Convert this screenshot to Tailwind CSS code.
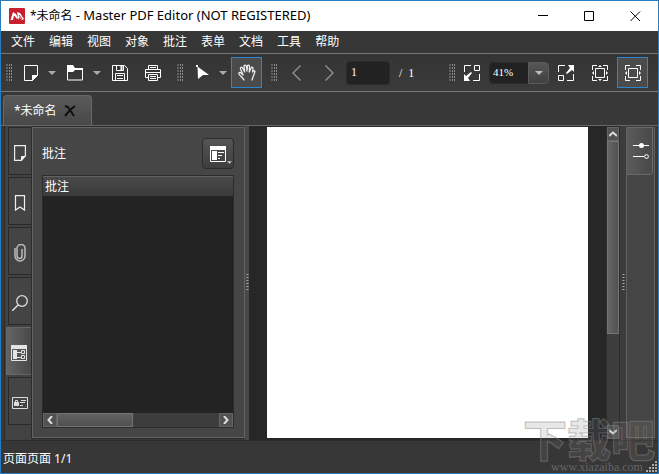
<!DOCTYPE html>
<html lang="zh-CN">
<head>
    <meta charset="UTF-8">
    <meta name="viewport" content="width=device-width, initial-scale=1.0">
    <title>*未命名 - Master PDF Editor</title>
    <script src="https://cdn.jsdelivr.net/npm/@tailwindcss/browser@4"></script>
</head>
<body class="h-screen overflow-hidden bg-[#383838] font-['Noto_Sans','Noto_Sans_CJK_SC',sans-serif] text-xs text-white">
    <div class="relative h-full flex flex-col border border-[#2b7cbf]">

        <!-- Title bar -->
        <header class="h-[30px] shrink-0 flex items-center bg-white text-black">
            <svg class="ml-2 w-4 h-4 shrink-0" viewBox="0 0 16 16">
                <rect width="16" height="16" rx="1" fill="#c8202f"/>
                <path d="M1.500 12 4 4l3 2 2 4-1 1-3-3-1 4zM8 4l3 1 4 6-2 1-3-3 0 3-1-2z" fill="#fff"/>
                <path d="M5 8l2 3M10 7l3 4" stroke="#c8202f"/>
            </svg>
            <h1 class="ml-[5px] flex-1 whitespace-nowrap text-xs">*未命名 <span class="text-[13px]">- Master PDF Editor (NOT REGISTERED)</span></h1>
            <button aria-label="最小化" class="w-[46px] h-full flex items-center justify-center">
                <svg class="w-[11px] h-[11px]" viewBox="0 0 11 11"><path d="M0 4.500h10" stroke="#000"/></svg>
            </button>
            <button aria-label="最大化" class="w-[46px] h-full flex items-center justify-center">
                <svg class="w-[11px] h-[11px]" viewBox="0 0 11 11"><path d="M.5.5h9v9h-9z" fill="none" stroke="#000"/></svg>
            </button>
            <button aria-label="关闭" class="w-[46px] h-full flex items-center justify-center">
                <svg class="w-[11px] h-[11px]" viewBox="0 0 11 11"><path d="M.5.5l9.500 9.500M10 .5L.5 10" stroke="#000"/></svg>
            </button>
        </header>

        <!-- Menu -->
        <nav class="h-[23px] shrink-0 flex items-center gap-[14px] pl-[10px] border-b border-[#777] bg-[#373737]">
            <button>文件</button>
            <button>编辑</button>
            <button>视图</button>
            <button>对象</button>
            <button>批注</button>
            <button>表单</button>
            <button>文档</button>
            <button>工具</button>
            <button>帮助</button>
        </nav>

        <!-- Toolbar -->
        <div class="h-[38px] shrink-0 flex items-center border-b border-[#777] bg-linear-to-b from-[#343434] to-[#3b3b3b]">
            <div class="w-[15px] shrink-0 flex justify-center">
                <svg class="w-[6px] h-[18px]" viewBox="0 0 6 18"><path d="M1 0v18M3.500 0v18M5.500 0v18" stroke="#8a8a8a" stroke-dasharray="2 1"/></svg>
            </div>
            <button aria-label="新建" class="w-[29px] h-8 shrink-0 flex items-center justify-center">
                <svg class="w-4 h-4" viewBox="0 0 16 16"><path d="M1.500.5h13v10l-5 5h-8z" fill="none" stroke="#fff"/><path d="M9 16v-6h6z" fill="#fff"/></svg>
            </button>
            <button aria-label="新建选项" class="w-[14px] h-8 shrink-0 flex items-center justify-center">
                <svg class="w-2 h-1" viewBox="0 0 8 4"><path d="M0 0h8L4 4z" fill="#aaa"/></svg>
            </button>
            <button aria-label="打开" class="w-8 h-8 shrink-0 flex items-center justify-center">
                <svg class="w-4 h-4" viewBox="0 0 16 16"><path d="M.5 1v14h15V4h-7" fill="none" stroke="#fff"/><path d="M0 0h6l2 3h8v2H8L6 7H0z" fill="#fff"/></svg>
            </button>
            <button aria-label="打开选项" class="w-3 h-8 shrink-0 flex items-center justify-center">
                <svg class="w-2 h-1" viewBox="0 0 8 4"><path d="M0 0h8L4 4z" fill="#aaa"/></svg>
            </button>
            <button aria-label="保存" class="w-[34px] h-8 shrink-0 flex items-center justify-center">
                <svg class="w-4 h-4" viewBox="0 0 16 16" fill="none" stroke="#fff"><path d="M.5.5h12l3 3v12H.5zM4.500.5v5h7v-5M3.500 15.500v-7h9v7M5 10.500h6M5 13.500h6"/><path d="M9.500 1v4" stroke-width="2"/></svg>
            </button>
            <button aria-label="打印" class="w-8 h-8 shrink-0 flex items-center justify-center">
                <svg class="w-4 h-4" viewBox="0 0 16 16" fill="none" stroke="#fff"><path d="M3.500 4V.5h9V4M3 12.500H.5v-8h15v8H13M3.500 9.500h9v6h-9zM5 11.500h6M5 13.500h6M5 2.500h6"/><path d="M1 7.500h14"/></svg>
            </button>
            <div class="w-[22px] shrink-0 flex justify-center">
                <svg class="w-[6px] h-[18px]" viewBox="0 0 6 18"><path d="M1 0v18M3.500 0v18M5.500 0v18" stroke="#8a8a8a" stroke-dasharray="2 1"/></svg>
            </div>
            <button aria-label="选择" class="w-6 h-8 shrink-0 flex items-center justify-center">
                <svg class="w-4 h-4" viewBox="0 0 16 16" fill="#fff"><path d="M2.500 1.500L14 10H8l-5 4z"/><path d="M1 0h2v2H1z"/></svg>
            </button>
            <button aria-label="选择选项" class="w-4 h-8 shrink-0 flex items-center justify-center">
                <svg class="w-2 h-1" viewBox="0 0 8 4"><path d="M0 0h8L4 4z" fill="#aaa"/></svg>
            </button>
            <button aria-label="手形工具" class="w-[31px] h-[31px] shrink-0 flex items-center justify-center border border-[#2f86cc] bg-[#4b4b4b]">
                <svg class="w-[18px] h-[18px]" viewBox="0 0 18 18" fill="none" stroke="#eee" stroke-width="1.300" stroke-linecap="round" stroke-linejoin="round"><path d="M6 16c-1-2-4-4-5-6-.5-1.500 1-2 2-1l2 2L2.500 5C2 3.500 4 2.500 4.700 4l2 4L6 2.500C6 1 8 .7 8.300 2.200L9 7l.5-5C9.700.8 11.500 1 11.500 2.300L11.300 8l1.700-4c.5-1.300 2-1 2 .3L14.500 8c.6-1.500 2-1.600 2.500-.5L15 13l-1 3"/></svg>
            </button>
            <div class="w-6 shrink-0 flex justify-center">
                <svg class="w-[6px] h-[18px]" viewBox="0 0 6 18"><path d="M1 0v18M3.500 0v18M5.500 0v18" stroke="#8a8a8a" stroke-dasharray="2 1"/></svg>
            </div>
            <button aria-label="上一页" class="w-5 h-8 shrink-0 flex items-center justify-center">
                <svg class="w-[9px] h-4" viewBox="0 0 9 16"><path d="M8.500.5L1 8l7.500 7.500" fill="none" stroke="#999" stroke-width="1.200"/></svg>
            </button>
            <button aria-label="下一页" class="ml-[13px] w-5 h-8 shrink-0 flex items-center justify-center">
                <svg class="w-[9px] h-4" viewBox="0 0 9 16"><path d="M.5.5L8 8 .5 15.500" fill="none" stroke="#999" stroke-width="1.200"/></svg>
            </button>
            <input type="text" value="1" aria-label="页码" class="ml-[7px] w-11 h-6 shrink-0 pl-1 rounded-sm border border-[#2b2b2b] bg-[#222] font-['Liberation_Serif',serif]">
            <span class="w-[59px] shrink-0 pl-[9px] whitespace-pre font-['Liberation_Serif',serif]">/  1</span>
            <svg class="w-[6px] h-[18px] shrink-0" viewBox="0 0 6 18"><path d="M1 0v18M3.500 0v18M5.500 0v18" stroke="#8a8a8a" stroke-dasharray="2 1"/></svg>
            <button aria-label="缩小" class="w-[34px] h-8 shrink-0 flex items-center justify-center">
                <svg class="w-4 h-4" viewBox="0 0 16 16"><path d="M.5 7V.5H7M9 15.500h6.500V9M10.500.5h5v5h-5z" fill="none" stroke="#fff"/><path d="M0 16V9l2 2 5-4 1 1-4 5 2 3z" fill="#fff"/></svg>
            </button>
            <div class="relative w-[60px] h-[22px] shrink-0">
                <select aria-label="缩放" class="appearance-none w-full h-full pl-[3px] rounded-sm border border-[#2b2b2b] bg-[#222] text-[11px] font-['Liberation_Serif',serif]">
                    <option>41%</option>
                    <option>100%</option>
                </select>
                <span class="pointer-events-none absolute inset-y-0 right-0 w-[21px] flex items-center justify-center rounded-r-sm border border-[#5c5c5c] bg-linear-to-b from-[#565656] to-[#414141]">
                    <svg class="w-2 h-1" viewBox="0 0 8 4"><path d="M0 0h8L4 4z" fill="#bbb"/></svg>
                </span>
            </div>
            <button aria-label="放大" class="w-[34px] h-8 shrink-0 flex items-center justify-center">
                <svg class="w-4 h-4" viewBox="0 0 16 16"><path d="M.5 7V.5H7M9 15.500h6.500V9M.5 10.500h5v5h-5z" fill="none" stroke="#fff"/><path d="M16 0v7l-2-2-5 4-1-1 4-5-2-3z" fill="#fff"/></svg>
            </button>
            <button aria-label="适合页面" class="w-[34px] h-8 shrink-0 flex items-center justify-center">
                <svg class="w-4 h-4" viewBox="0 0 16 16"><path d="M.5 5V.5H5M11 .5h4.500V5M15.500 11v4.500H11M5 15.500H.5V11M3.500 3.500h9v9h-9z" fill="none" stroke="#fff"/><path d="M6 2l2-2 2 2zM6 14l2 2 2-2zM2 6L0 8l2 2zM14 6l2 2-2 2z" fill="#fff"/></svg>
            </button>
            <button aria-label="适合宽度" class="w-[31px] h-[31px] shrink-0 flex items-center justify-center border border-[#2f86cc] bg-[#4b4b4b]">
                <svg class="w-4 h-4" viewBox="0 0 16 16"><path d="M.5 5V.5H5M11 .5h4.500V5M15.500 11v4.500H11M5 15.500H.5V11M3.500 3.500h9v9h-9z" fill="none" stroke="#fff"/><path d="M2 6L0 8l2 2zM14 6l2 2-2 2z" fill="#fff"/></svg>
            </button>
        </div>

        <!-- Document tabs -->
        <div class="h-[34px] shrink-0 flex items-end px-[2px] border-b border-[#666]">
            <div class="w-[89px] h-[30px] flex items-center pl-[10px] gap-[7px] rounded-t-sm border border-b-0 border-[#686868] bg-linear-to-b from-[#5a5a5a] to-[#484848]">
                <span>*未命名</span>
                <button aria-label="关闭标签">
                    <svg class="w-3 h-3" viewBox="0 0 12 12"><path d="M1 1l3 1 6 9M11 1L6 5l-5 6" fill="none" stroke="#111" stroke-width="2"/></svg>
                </button>
            </div>
        </div>

        <!-- Work area -->
        <main class="flex-1 min-h-0 flex px-[3px]">
            <!-- Left side tabs -->
            <div class="w-7 shrink-0 flex flex-col gap-[2px] pl-[3px] pt-px border-l border-[#2a2a2a] bg-[#424242]">
                <button aria-label="页面" class="h-12 flex items-center justify-center pt-1 pr-[2px] border border-r-0 border-[#2a2a2a] bg-[#444]">
                    <svg class="w-3 h-4" viewBox="0 0 12 16"><path d="M.6.6h10.800v10L7.500 15.400H.6z" fill="none" stroke="#eee" stroke-width="1.200"/><path d="M7 16v-5h5z" fill="#eee"/></svg>
                </button>
                <button aria-label="书签" class="h-12 flex items-center justify-center pt-1 pr-[2px] border border-r-0 border-[#2a2a2a] bg-[#444]">
                    <svg class="w-3 h-4" viewBox="0 0 12 16"><path d="M1.500.6h9v14.500L6 12l-4.500 3.100z" fill="none" stroke="#eee" stroke-width="1.200"/></svg>
                </button>
                <button aria-label="附件" class="h-12 flex items-center justify-center pt-1 pr-[2px] border border-r-0 border-[#2a2a2a] bg-[#444]">
                    <svg class="w-3 h-[18px]" viewBox="0 0 12 18"><path d="M1 4v8a5 5 0 0 0 10 0V5a4 4 0 0 0-8-1v8a2.500 2.500 0 0 0 5 0V5" fill="none" stroke="#bbb" stroke-width="1.500"/></svg>
                </button>
                <button aria-label="搜索" class="h-12 flex items-center justify-center pt-1 pr-[2px] border border-r-0 border-[#2a2a2a] bg-[#444]">
                    <svg class="w-4 h-4" viewBox="0 0 16 16"><circle cx="10" cy="6" r="5.300" fill="none" stroke="#ddd" stroke-width="1.300"/><path d="M6 10l-6 6" stroke="#ddd" stroke-width="1.500"/></svg>
                </button>
                <button aria-label="批注" class="-ml-[2px] h-12 flex items-center justify-center pt-1 pr-[2px] border border-r-0 border-[#666] bg-linear-to-r from-[#646464] to-[#484848]">
                    <svg class="w-4 h-4" viewBox="0 0 16 16"><path d="M.5.5h15v15H.5zM6 7.500h4M6 12.500h4M10.500 5.500h3v3h-3zM10.500 10.500h3v3h-3z" fill="none" stroke="#e4e4e4"/><path d="M0 0h16v4H0zM2 5h4v9H2z" fill="#e4e4e4"/></svg>
                </button>
                <button aria-label="签名" class="h-12 flex items-center justify-center pt-1 pr-[2px] border border-r-0 border-[#2a2a2a] bg-[#444]">
                    <svg class="w-4 h-3" viewBox="0 0 16 12"><path d="M.5.5h15v11H.5zM9 3.500h5M8 5.500h5M8 8.500h3" fill="none" stroke="#ddd"/><path d="M2 5h5v4H2z" fill="#ddd"/><path d="M3.500 5V3.500h2V5" fill="none" stroke="#ddd"/></svg>
                </button>
            </div>

            <!-- Comments panel -->
            <section class="w-[213px] shrink-0 mt-px mb-[2px] flex flex-col pl-[9px] pr-[10px] pb-[9px] border border-[#636363] bg-[#464646] outline outline-[#2c2c2c]">
                <div class="h-[47px] shrink-0 flex items-center justify-between pt-1">
                    <h2>批注</h2>
                    <button aria-label="批注选项" class="relative w-8 h-[31px] flex items-center justify-center rounded-sm border border-[#2c2c2c] bg-linear-to-b from-[#555] to-[#3e3e3e]">
                        <svg class="w-4 h-4" viewBox="0 0 16 16"><path d="M.5.5h15v15H.5z" fill="none" stroke="#fff"/><path d="M0 0h16v4H0zM2 5h5v9H2z" fill="#fff"/><path d="M8 6.500h6M8 9.500h4M8 12.500h2" stroke="#fff"/></svg>
                        <svg class="absolute right-px bottom-1 w-[5px] h-[3px]" viewBox="0 0 6 3"><path d="M0 0h6L3 3z" fill="#ccc"/></svg>
                    </button>
                </div>
                <div class="flex-1 min-h-0 flex flex-col border border-[#2c2c2c] bg-[#232323]">
                    <h3 class="h-5 shrink-0 flex items-center pl-[2px] border-t border-[#606060] bg-linear-to-b from-[#494949] to-[#3b3b3b]">批注</h3>
                    <div class="flex-1"></div>
                    <div class="h-[14px] shrink-0 flex bg-[#3d3d3d]">
                        <button aria-label="向左滚动" class="w-[14px] flex items-center justify-center border border-[#666] bg-[#525252]">
                            <svg class="w-[6px] h-2" viewBox="0 0 6 8"><path d="M5 0L1.500 4 5 8" fill="none" stroke="#ddd" stroke-width="2"/></svg>
                        </button>
                        <div class="w-[40%] border border-[#747474] bg-linear-to-b from-[#626262] to-[#505050]"></div>
                        <button aria-label="向右滚动" class="ml-auto w-[14px] flex items-center justify-center border border-[#666] bg-[#525252]">
                            <svg class="w-[6px] h-2" viewBox="0 0 6 8"><path d="M1 0l3.500 4L1 8" fill="none" stroke="#ddd" stroke-width="2"/></svg>
                        </button>
                    </div>
                </div>
            </section>

            <div class="w-1 shrink-0 flex items-center justify-center bg-[#484848]">
                <svg class="w-[3px] h-[18px]" viewBox="0 0 3 18"><path d="M1.500 0v18" stroke="#aaa" stroke-width="2" stroke-dasharray="1 2"/></svg>
            </div>

            <!-- Page view -->
            <div class="flex-1 flex bg-[#272727]">
                <div class="flex-1 mt-px ml-[18px] mr-[18px] mb-[2px] bg-white"></div>
                <div class="w-[14px] shrink-0 my-px flex flex-col border-x border-[#2c2c2c] bg-[#3d3d3d]">
                    <button aria-label="向上滚动" class="h-[14px] flex items-center justify-center border border-[#666] bg-[#525252]">
                        <svg class="w-2 h-[6px]" viewBox="0 0 8 6"><path d="M0 5l4-3.500L8 5" fill="none" stroke="#ddd" stroke-width="2"/></svg>
                    </button>
                    <div class="h-[62%] border border-[#747474] bg-linear-to-r from-[#666] to-[#525252]"></div>
                    <button aria-label="向下滚动" class="mt-auto h-[14px] flex items-center justify-center border border-[#666] bg-[#525252]">
                        <svg class="w-2 h-[6px]" viewBox="0 0 8 6"><path d="M0 1l4 3.500L8 1" fill="none" stroke="#ddd" stroke-width="2"/></svg>
                    </button>
                </div>
            </div>

            <div class="w-[6px] shrink-0 flex items-center justify-center bg-[#3c3c3c]">
                <svg class="w-[3px] h-[18px]" viewBox="0 0 3 18"><path d="M1.500 0v18" stroke="#aaa" stroke-width="2" stroke-dasharray="1 2"/></svg>
            </div>

            <!-- Right side tab -->
            <div class="w-[29px] shrink-0 mt-px mb-[2px] border border-t-0 border-[#636363] bg-[#454545]">
                <button aria-label="属性" class="w-[26px] h-12 flex items-center justify-center pl-[3px] rounded-br-sm border border-[#6a6a6a] border-l-0 bg-linear-to-r from-[#5c5c5c] to-[#484848]">
                    <svg class="w-4 h-4" viewBox="0 0 16 16"><path d="M0 2.500h16M0 13.500h11" stroke="#fff" stroke-width="1.200"/><circle cx="8.500" cy="2.500" r="2.500" fill="#fff"/><circle cx="13.500" cy="13.500" r="1.900" fill="none" stroke="#fff"/></svg>
                </button>
            </div>
        </main>

        <!-- Status bar -->
        <footer class="h-[33px] shrink-0 flex items-center pt-1 pl-[2px] border-t border-[#2c2c2c] bg-[#373737]">页面页面 1/1</footer>

        <!-- Watermark -->
        <div class="pointer-events-none absolute right-[2px] bottom-0 w-[134px] text-center font-['Noto_Sans_CJK_SC',sans-serif]">
            <div class="text-[44px] leading-[46px] font-black whitespace-nowrap text-[#808080]/20 [-webkit-text-stroke:1px_#88888880]">下载吧</div>
            <div class="pl-4 text-xs leading-3 text-[#666] font-['Liberation_Serif',serif]">www.xiazaiba.com</div>
        </div>
        <svg class="absolute right-px bottom-px w-[11px] h-[11px]" viewBox="0 0 11 11"><path d="M0 10h11M3 7h8M6 4h5M9 1h2" stroke="#aaa" stroke-width="2" stroke-dasharray="2 1"/></svg>
    </div>
</body>
</html>
